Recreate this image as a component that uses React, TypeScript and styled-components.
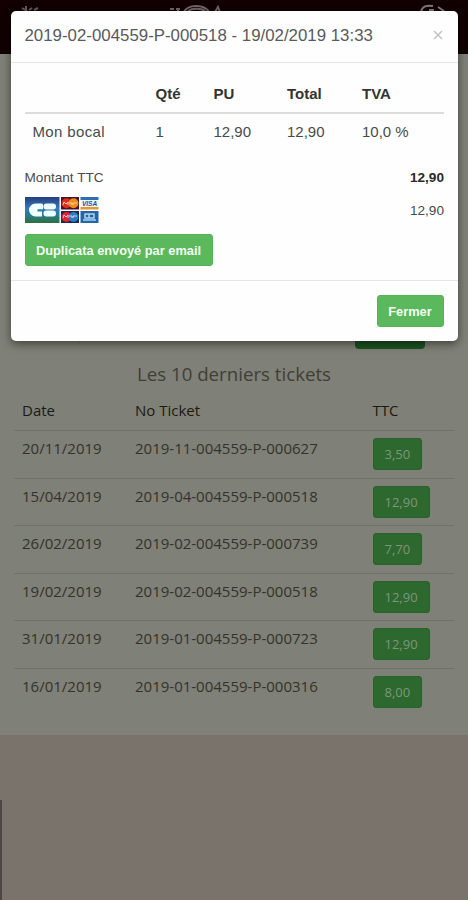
import React from "react";
import styled, { createGlobalStyle } from "styled-components";

const GlobalStyle = createGlobalStyle`
  * { box-sizing: border-box; }
  html, body { margin: 0; padding: 0; overflow: hidden; }
  body { background: #79736c; }
`;

const Page = styled.div`
  position: relative;
  display: flex;
  flex-direction: column;
  width: 468px;
  height: 900px;
  background: #79736c;
  color: #33332c;
  font-family: "Open Sans", "Noto Sans", sans-serif;
  font-size: 15px;
`;

const TopBar = styled.header`
  display: grid;
  grid-template-columns: 149px 249px 30px;
  align-items: start;
  height: 54px;
  flex: none;
  padding: 4px 0 0 20px;
  background: #120002;
`;

const TicketPanel = styled.main`
  display: flex;
  flex-direction: column;
  flex: none;
  height: 681px;
  background: #7f8077;
`;

const SearchRow = styled.div`
  display: flex;
  justify-content: space-between;
  flex: none;
  height: 295px;
  padding: 259px 43px 0 25px;
`;

const SearchField = styled.div`
  width: 55px;
  height: 30px;
  border-right: 1px solid #74756c;
`;

const SearchButton = styled.div`
  width: 70px;
  height: 36px;
  border-radius: 4px;
  background: #1d5423;
`;

const Heading = styled.h2`
  margin: 11px 0 0;
  height: 28px;
  font-size: 18.7px;
  line-height: 28px;
  font-weight: 400;
  text-align: center;
  color: #403f36;
`;

const TicketTable = styled.div`
  display: flex;
  flex-direction: column;
  margin: 7px 14px 0 14px;
`;

const TicketRow = styled.div<{ $head?: boolean }>`
  display: grid;
  grid-template-columns: 113px 237.5px 1fr;
  align-items: start;
  height: ${(p) => (p.$head ? "35px" : "47.6px")};
  padding: ${(p) => (p.$head ? "5px 8px 0" : "7px 8px 0")};
  border-top: ${(p) => (p.$head ? "0" : "1px solid #717269")};
  line-height: 20px;
  color: ${(p) => (p.$head ? "#1b1b15" : "#33332c")};
`;

const AmountButton = styled.button`
  justify-self: start;
  height: 32px;
  padding: 0 11px;
  border: 1px solid #2a622b;
  border-radius: 3px;
  background: #2d682e;
  color: #80947b;
  font-family: inherit;
  font-size: 13px;
  line-height: 30px;
`;

const ScrollMark = styled.div`
  margin-top: 65px;
  width: 2px;
  height: 100px;
  background: #4b4842;
`;

const Dialog = styled.section`
  position: absolute;
  top: 11px;
  left: 10.5px;
  display: flex;
  flex-direction: column;
  width: 447.5px;
  height: 330px;
  border-radius: 5px;
  background: #fefefe;
  box-shadow: 0 3px 10px rgba(0, 0, 0, 0.5);
  color: #4a4a4a;
  font-family: "Liberation Sans", Arial, sans-serif;
`;

const DialogHeader = styled.header`
  display: flex;
  justify-content: space-between;
  align-items: center;
  height: 52px;
  padding: 0 15px 1px 14px;
  border-bottom: 1px solid #e6e6e6;
  font-size: 16.85px;
  color: #5a5a5a;
`;

const CloseButton = styled.span`
  display: flex;
  padding-bottom: 2px;
`;

const DialogBody = styled.div`
  display: flex;
  flex-direction: column;
  height: 217px;
  padding: 11px 14px 0;
`;

const LineGrid = styled.div<{ $head?: boolean }>`
  display: grid;
  grid-template-columns: 123px 58px 73.5px 75px 1fr;
  align-items: center;
  height: ${(p) => (p.$head ? "40px" : "35px")};
  padding: ${(p) => (p.$head ? "0 0 0 8px" : "0 0 0 8px")};
  border-bottom: ${(p) => (p.$head ? "2px solid #dcdcdc" : "0")};
  font-size: 15px;
  font-weight: ${(p) => (p.$head ? 700 : 400)};
  color: ${(p) => (p.$head ? "#333" : "#4a4a4a")};
`;

const ProductName = styled.span`
  letter-spacing: 0.35px;
`;

const Summaries = styled.div`
  margin-top: 12px;
`;

const Summary = styled.div<{ $height: number }>`
  display: flex;
  justify-content: space-between;
  align-items: center;
  height: ${(p) => p.$height}px;
  font-size: 13.6px;

  strong {
    color: #2b2b2b;
  }
`;

const GreenButton = styled.button<{ $width: number; $gap?: number }>`
  width: ${(p) => p.$width}px;
  height: 32px;
  flex: none;
  margin-top: ${(p) => p.$gap ?? 0}px;
  padding: 0;
  border: 1px solid #55b35a;
  border-radius: 3px;
  background: #5cb85c;
  color: #f4fff2;
  font-family: inherit;
  font-size: 12.8px;
  font-weight: 700;
  white-space: nowrap;
`;

const DialogFooter = styled.footer`
  display: flex;
  justify-content: flex-end;
  height: 61px;
  padding: 14px 14.5px 0;
  border-top: 1px solid #e6e6e6;
`;

const MenuIcon = () => (
  <svg width="22" height="12" viewBox="0 0 22 12" fill="none" stroke="#645b5b" strokeWidth="2">
    <path d="M2 4l5 3M6 2v5M9 6l3-2M14 6l4-2" />
  </svg>
);

const LogoIcon = () => (
  <svg width="54" height="12" viewBox="0 0 54 12" fill="none" stroke="#706767" strokeWidth="2">
    <path d="M1 5h4M7 5h4M9 5v5M15 8c4-8 20-8 25 0M19 7c4-3 13-3 17 0M46 8l3-5 2 5" />
  </svg>
);

const LogoutIcon = () => (
  <svg width="30" height="12" viewBox="0 0 30 12" fill="none" stroke="#827979" strokeWidth="2">
    <path d="M3 8c1-6 6-7 12-6M11 6h5M20 3l6 4" />
  </svg>
);

const CloseIcon = () => (
  <svg width="10" height="10" viewBox="0 0 10 10" stroke="#c5c5c5" strokeWidth="1.6">
    <path d="M1 1l8 8M9 1L1 9" />
  </svg>
);

const CardLogos = () => (
  <svg width="76" height="28" viewBox="1 0 76 28">
    <defs>
      <linearGradient id="cb" x1="0" y1="0" x2="0" y2="1">
        <stop offset="0" stopColor="#263d7d" />
        <stop offset=".42" stopColor="#3478b8" />
        <stop offset=".67" stopColor="#287c99" />
        <stop offset="1" stopColor="#2d703a" />
      </linearGradient>
    </defs>
    <rect x="1" y="1" width="34.5" height="26" fill="url(#cb)" />
    <path d="M18 7.5h-6.5a6.5 6.5 0 0 0 0 13H18v-5h-4.5v-2.2H19V8.5z" fill="#f0ffff" />
    <rect x="19.5" y="7.5" width="12.5" height="6" rx="3" fill="#f0ffff" />
    <rect x="19.5" y="14.4" width="12.5" height="6" rx="3" fill="#f0ffff" />
    <rect x="37" y="1" width="18" height="12.5" fill="#42152a" />
    <circle cx="42.5" cy="7.3" r="5" fill="#df2d1f" />
    <circle cx="49.5" cy="7.3" r="5" fill="#f08a22" />
    <path d="M39 9l1-3 2 2 2-2v3M45 7h3v2M49 9V7h4" stroke="#ffd0a0" fill="none" />
    <rect x="37" y="15" width="18" height="12" fill="#1c2855" />
    <circle cx="42.5" cy="21" r="4.9" fill="#de2630" />
    <circle cx="49.5" cy="21" r="4.9" fill="#287bc5" />
    <path d="M39 22l1-3 2 2 2-2v3M45 20h3v2M49 22v-2h4" stroke="#e9cad7" fill="none" />
    <rect x="56.5" y="1" width="18" height="12.5" fill="#eef6fc" />
    <rect x="56.5" y="1" width="18" height="3" fill="#326cb3" />
    <rect x="56.5" y="11" width="18" height="2.5" fill="#e59a31" />
    <text x="65.5" y="10" fontSize="6.5" fontWeight="700" fontStyle="italic" textAnchor="middle" fill="#244f9b">VISA</text>
    <rect x="56.5" y="15" width="18" height="12" fill="#2465a8" />
    <path d="M61 18h9v4h-9zM65 18v4M59 24h13" stroke="#add4ed" strokeWidth="1.5" fill="none" />
  </svg>
);

const tickets = [
  ["20/11/2019", "2019-11-004559-P-000627", "3,50"],
  ["15/04/2019", "2019-04-004559-P-000518", "12,90"],
  ["26/02/2019", "2019-02-004559-P-000739", "7,70"],
  ["19/02/2019", "2019-02-004559-P-000518", "12,90"],
  ["31/01/2019", "2019-01-004559-P-000723", "12,90"],
  ["16/01/2019", "2019-01-004559-P-000316", "8,00"],
];

export default function App() {
  return (
    <>
      <GlobalStyle />
      <Page>
        <TopBar>
          <MenuIcon />
          <LogoIcon />
          <LogoutIcon />
        </TopBar>
        <TicketPanel>
          <SearchRow>
            <SearchField />
            <SearchButton />
          </SearchRow>
          <Heading>Les 10 derniers tickets</Heading>
          <TicketTable>
            <TicketRow $head>
              <span>Date</span>
              <span>No Ticket</span>
              <span>TTC</span>
            </TicketRow>
            {tickets.map(([date, number, amount]) => (
              <TicketRow key={number}>
                <span>{date}</span>
                <span>{number}</span>
                <AmountButton>{amount}</AmountButton>
              </TicketRow>
            ))}
          </TicketTable>
        </TicketPanel>
        <ScrollMark />
        <Dialog role="dialog">
          <DialogHeader>
            <span>2019-02-004559-P-000518 - 19/02/2019 13:33</span>
            <CloseButton>
              <CloseIcon />
            </CloseButton>
          </DialogHeader>
          <DialogBody>
            <LineGrid $head>
              <span />
              <span>Qté</span>
              <span>PU</span>
              <span>Total</span>
              <span>TVA</span>
            </LineGrid>
            <LineGrid>
              <ProductName>Mon bocal</ProductName>
              <span>1</span>
              <span>12,90</span>
              <span>12,90</span>
              <span>10,0 %</span>
            </LineGrid>
            <Summaries>
              <Summary $height={33}>
                <span>Montant TTC</span>
                <strong>12,90</strong>
              </Summary>
              <Summary $height={32}>
                <CardLogos />
                <span>12,90</span>
              </Summary>
            </Summaries>
            <GreenButton $width={188} $gap={8}>Duplicata envoyé par email</GreenButton>
          </DialogBody>
          <DialogFooter>
            <GreenButton $width={67}>Fermer</GreenButton>
          </DialogFooter>
        </Dialog>
      </Page>
    </>
  );
}
